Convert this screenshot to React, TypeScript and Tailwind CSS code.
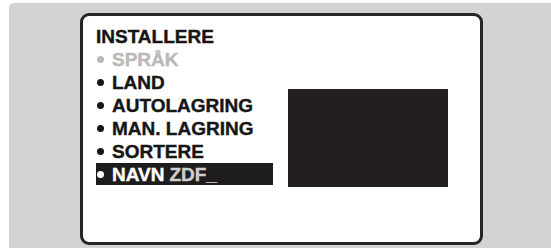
import React from "react";

const Item = ({ label, muted }: { label: string; muted?: boolean }) => (
  <div className={`flex items-center h-[23px] ${muted ? "text-[#b9b9b9]" : "text-[#161616]"}`}>
    <span className="w-[16px] flex">
      <span className={`ml-[1px] w-[7px] h-[7px] rounded-full ${muted ? "bg-[#b9b9b9]" : "bg-[#161616]"}`} />
    </span>
    <span>{label}</span>
  </div>
);

export default function App() {
  return (
    <div
      className="w-[551px] h-[248px] bg-white overflow-hidden"
      style={{ fontFamily: '"Liberation Sans", Arial, sans-serif' }}
    >
      <div className="ml-[9px] mt-[3px] h-[245px] bg-[#d3d3d3] rounded-tl-[5px] pt-[10px] pl-[71px]">
        <div className="w-[403px] h-[232px] bg-white border-[3px] border-[#262626] rounded-[9px] flex pl-[13px] pt-[9px]">
          <div className="w-[177px] text-[19px] font-bold leading-[23px] [-webkit-text-stroke:0.4px]">
            <div className="h-[23px] text-[#161616]">INSTALLERE</div>
            <Item label="SPRÅK" muted />
            <Item label="LAND" />
            <Item label="AUTOLAGRING" />
            <Item label="MAN. LAGRING" />
            <Item label="SORTERE" />
            <div className="flex items-center h-[22px] bg-[#1f1c1d] text-white">
              <span className="w-[16px] flex">
                <span className="ml-[1px] w-[7px] h-[7px] rounded-full bg-white" />
              </span>
              <span>NAVN</span>
              <span className="ml-[5px] text-[#cfcfcf]">ZDF_</span>
            </div>
          </div>
          <div className="ml-[15px] mt-[64px] w-[160px] h-[98px] bg-[#231f20]" />
        </div>
      </div>
    </div>
  );
}
